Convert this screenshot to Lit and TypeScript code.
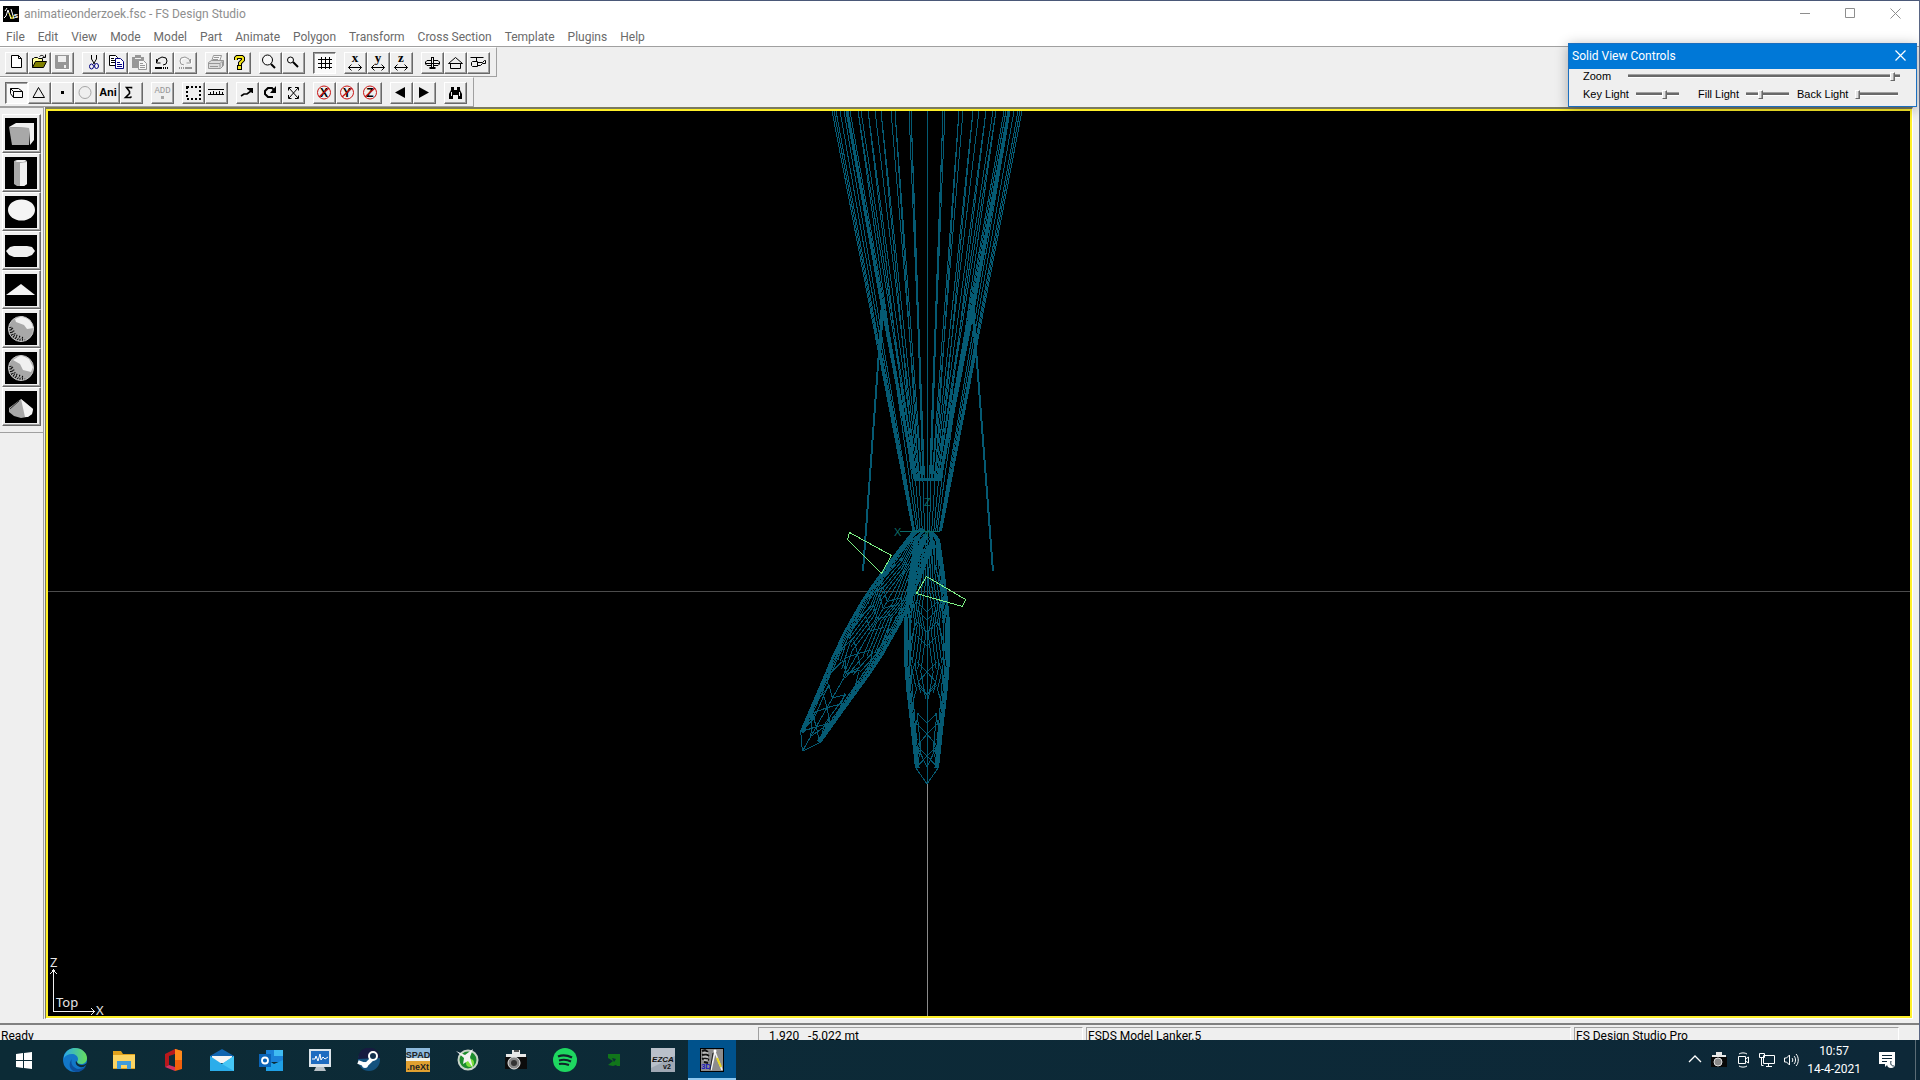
import { LitElement, html, svg, css, type SVGTemplateResult } from "lit";
import { customElement, state } from "lit/decorators.js";
import { classMap } from "lit/directives/class-map.js";

type Tool = { label: string; icon: SVGTemplateResult; pressed?: boolean; disabled?: boolean };

const line = (d: string, color = "#000", width = 1) =>
  svg`<path d=${d} fill="none" stroke=${color} stroke-width=${width}></path>`;
const fill = (d: string, color = "#000") => svg`<path d=${d} fill=${color}></path>`;
const glyph = (text: string, x: number, y: number, size: number, color = "#000", family = "Liberation Sans") =>
  svg`<text x=${x} y=${y} font-size=${size} font-weight="700" font-family="${family}, sans-serif" text-anchor="middle" fill=${color}>${text}</text>`;

const axisSize = (axis: string) => svg`
  ${glyph(axis, 9, 8, 13, "#000", "Liberation Serif")}
  ${line("M2.5 13.5H15.5M5.5 10.5l-3 3 3 3M12.5 10.5l3 3-3 3")}`;

const axisLock = (axis: string) => svg`
  ${glyph(axis, 9, 13, 12)}
  <circle cx="9" cy="8.5" r="6.5" fill="none" stroke="#c81414"></circle>
  ${line("M4 13L14 4", "#c81414", 1.4)}`;

const FILE_TOOLS: Tool[][] = [
  [
    { label: "New", icon: svg`<path d="M4.5 1.5h7l3 3v9h-10z" fill="#fff" stroke="#000"></path>${line("M11.5 1.5v3h3")}` },
    {
      label: "Open",
      icon: svg`<path d="M2.5 13.5v-9h1l1-1h3l1 1h4v3" fill="#ffffa0" stroke="#000"></path>
        <path d="M2.5 13.5l3-6h11l-3 6z" fill="#808000" stroke="#000"></path>${line("M9.5 2.5c2-2 4-1 5 1M15.5 0.5v3h-3")}`,
    },
    {
      label: "Save",
      disabled: true,
      icon: svg`${fill("M3 2h14v14H4l-1-1z", "#fff")}${fill("M2 1h14v14H3l-1-1z", "#979797")}${fill("M5 2h8v6H5zM11 11h2v3h-2z", "#efefef")}`,
    },
  ],
  [
    {
      label: "Cut",
      icon: svg`${line("M7.5 1v4l3 5M12.5 1v4l-3 5")}
        <ellipse cx="7.5" cy="12.5" rx="2" ry="2.5" fill="none" stroke="#000080"></ellipse>
        <ellipse cx="12.5" cy="12" rx="2" ry="2.5" fill="none" stroke="#000080"></ellipse>`,
    },
    {
      label: "Copy",
      icon: svg`<path d="M2.5 1.5h6l2 2v8h-8z" fill="#fff" stroke="#000"></path>${line("M4 4.5h3M4 6.5h5M4 8.5h5")}
        <path d="M8.5 4.5h5l3 3v7h-8z" fill="#fff" stroke="#000080"></path>${line("M10 8.5h3M10 10.5h5M10 12.5h5", "#000080")}`,
    },
    {
      label: "Paste",
      disabled: true,
      icon: svg`${fill("M2 3h3V1h6v2h3v11H2z", "#979797")}${line("M5 4.5h6", "#efefef")}
        <path d="M8.5 6.5h5l3 3v6h-8z" fill="#f6f6f6" stroke="#979797"></path>${line("M10 9.5h3M10 11.5h5M10 13.5h5", "#979797")}`,
    },
    { label: "Undo", icon: svg`${line("M4 8L5 5 9 3l4 1 1 3-1 3-3 1M3.5 5v4h4")}${line("M2 14h7", "#000", 2)}${line("M10 14h1M12 14h1M14 14h1", "#000", 2)}` },
    {
      label: "Redo",
      disabled: true,
      icon: svg`${line("M15 9L14 6l-4-2-4 1-1 3 1 3 3 1M15.5 6v4h-4", "#fff")}${line("M14 8L13 5 9 3 5 4 4 7l1 3 3 1M14.5 5v4h-4", "#979797")}${line("M3 14h1M5 14h1M7 14h1M9 14h7", "#979797", 2)}`,
    },
  ],
  [
    {
      label: "Print",
      disabled: true,
      icon: svg`<path d="M6.5 1.5h8l-2 6h-8z" fill="#f6f6f6" stroke="#979797"></path>${line("M7 3.5h5M6 5.5h5", "#979797")}
        <path d="M1.5 8.5l3-2h12v5l-3 3h-12z" fill="#ddd" stroke="#979797"></path>${line("M2 9.5h11v4M13 9.5l3-3M3 12.5h8M15.5 8v4", "#979797")}`,
    },
    {
      label: "Help",
      icon: svg`${line("M6 6V4l1-1h5l1 1v2l-3 3v2", "#000", 4)}${fill("M7 11h5v5H7z")}${line("M6 6V4l1-1h5l1 1v2l-3 3v2", "#f4e61a", 2)}${fill("M8 12h3v3H8z", "#f4e61a")}`,
    },
  ],
  [
    { label: "Zoom in", icon: svg`<circle cx="6.5" cy="6" r="5" fill="#f8f8f8" stroke="#000"></circle>${line("M10 10l4 4", "#000", 2)}` },
    { label: "Zoom out", icon: svg`<circle cx="6.5" cy="6" r="3" fill="#f8f8f8" stroke="#000"></circle>${line("M9 8l5 5", "#000", 2)}` },
  ],
  [{ label: "Grid", pressed: true, icon: line("M6.5 3v12M10.5 3v12M14.5 3v12M3 5.5h14M3 9.5h14M3 13.5h14") }],
  [
    { label: "Size X", icon: axisSize("x") },
    { label: "Size Y", icon: axisSize("y") },
    { label: "Size Z", icon: axisSize("z") },
  ],
  [
    {
      label: "Aircraft",
      icon: line("M8.5 4v11M10.5 4v11M8 3.5h3M8 6.5H4L2.5 8v2L4 11.5h4M11 6.5h4L16.5 8v2L15 11.5h-4M3 9.5h13M6.5 13.5h6M6.5 14.5h6"),
    },
    { label: "Building", icon: line("M2.5 9.5L9.5 3.5l7 6zM4.5 9.5v5h10v-5") },
    {
      label: "Helicopter",
      icon: line("M1.5 3.5h13M7.5 3.5v4M2.5 8.5l1-1h5v5h-5l-1-1zM8.5 8.5h5l2-2h1v3h-3l-2 2h-3"),
    },
  ],
];

const MODE_TOOLS: Tool[][] = [
  [
    { label: "Part mode", pressed: true, icon: line("M6.5 7.5h9v6h-9zM3.5 4.5h8l4 3M3.5 4.5l3 3M3.5 4.5v5l3 4") },
    { label: "Polygon mode", icon: line("M3 13.5L8.5 3.5l6 10z") },
    { label: "Point mode", icon: fill("M8 7h3v3H8z") },
    { label: "Circle mode", disabled: true, icon: svg`<circle cx="9" cy="8.5" r="6" fill="none" stroke="#a6a6a6"></circle>` },
    { label: "Animation mode", icon: glyph("Ani", 9, 12, 11) },
    { label: "Cross section mode", icon: line("M9.5 4.5V3.5H4.5l3 4v2l-4 4h5l1-1", "#000", 1.6) },
  ],
  [
    {
      label: "Add",
      disabled: true,
      icon: svg`<text x="9.5" y="9" font-size="9" font-family="Liberation Mono, monospace" text-anchor="middle" fill="#979797">ADD</text>${fill("M8 12h3v3H8z", "#a6a6a6")}`,
    },
  ],
  [
    {
      label: "Select area",
      icon: svg`<rect x="3" y="3" width="13" height="12" fill="none" stroke="#000" stroke-width="2" stroke-dasharray="2 2"></rect>`,
    },
    { label: "Measure", icon: line("M1 5.5h16M1 10.5h16M3.5 8v2M6.5 7v3M9.5 8v2M12.5 7v3M15.5 8v2") },
  ],
  [
    { label: "Move", icon: svg`${line("M3 12l3-2h3l4-3", "#000", 1.6)}${fill("M9 4h6v5h-1l-2-2-3-2z")}` },
    { label: "Rotate", icon: svg`${line("M12 13H7L4 10V7l3-3h4l2 2", "#000", 2)}${fill("M15 2v7H9z")}` },
    { label: "Scale", icon: line("M5 4l9 10M14 4L5 14M4.5 6.5v-3h3M11 3.5h3.5v3M4.5 11v3.5h3M11 14.5h3.5v-3") },
  ],
  [
    { label: "Lock X", icon: axisLock("X") },
    { label: "Lock Y", icon: axisLock("Y") },
    { label: "Lock Z", icon: axisLock("Z") },
  ],
  [
    { label: "Previous", icon: fill("M3 8.5L13 3v11z") },
    { label: "Next", icon: fill("M14 8.5L4 3v11z") },
  ],
  [
    {
      label: "Find",
      icon: svg`${fill("M5 3h3v3h3V3h3v3l2 4v5h-4v-4H7v4H3v-5l2-4z")}${line("M5.5 8v4M13.5 8v4", "#efefef")}`,
    },
  ],
];

const sphere = (light: string) => svg`
  <circle cx="16" cy="16" r="12.5" fill="#a8a8a8"></circle>
  <path d=${light} fill="#f0f0f0"></path>
  <path d="M5 14l2 8 6 5 7 1" fill="none" stroke="#000" stroke-width="3" stroke-dasharray="1 1.5"></path>
  <path d="M7 15l3 7 8 3" fill="none" stroke="#000" stroke-width="2" stroke-dasharray="1 2"></path>
  <circle cx="16" cy="16" r="12.5" fill="none" stroke="#c8c8c8" stroke-width="1"></circle>`;

const SHAPES: { label: string; icon: SVGTemplateResult }[] = [
  { label: "Box", icon: svg`${fill("M4 9l20 1v17H7z", "#a8a8a8")}${fill("M4 9l7-4h18v17l-4 5-1-17z", "#f0f0f0")}` },
  { label: "Cylinder", icon: svg`${fill("M9 4l3-1h8l2 1v23l-3 2h-7l-3-2z", "#a8a8a8")}${fill("M15 6l7-1v22l-3 2h-4zM10 4l3-1h7l1 1-3 1h-6z", "#f0f0f0")}` },
  { label: "Disc", icon: svg`<ellipse cx="16.5" cy="14" rx="13.5" ry="10.5" fill="#f4f4f4"></ellipse>` },
  { label: "Tube", icon: svg`<path d="M1 16l4-4 4-1h13l5 1 3 4-3 4-5 2H9l-5-2z" fill="#f0f0f0"></path>` },
  { label: "Triangle", icon: fill("M1 21L16 10l14 11z", "#f4f4f4") },
  { label: "Sphere", icon: sphere("M10 6l7-3 8 4 4 8-7 1-3-4-8-3z") },
  { label: "Geodesic sphere", icon: sphere("M8 8l8-5 8 4 4 8-2 5-8-2-3-6z") },
  { label: "Cone", icon: svg`${fill("M16 8L28 18l-1 5-5 3-6 1-7-2-5-4v-4z", "#a8a8a8")}${fill("M16 8l12 10-1 5-4 3-3 0z", "#f4f4f4")}${line("M5 18l9-8", "#333")}` },
];

const VIEW_TEAL = "#055a73";
const CENTER = 927;

/** Mesh of the tapered body: straight edges that narrow from the top of the view to a base line. */
function taperEdges(offsets: number[], ratio: number, base: number): string {
  return offsets
    .flatMap((o) => [o, -o])
    .map((o) => `M${CENTER + o} 111L${(CENTER + o * ratio).toFixed(1)} ${base}`)
    .join("");
}

/** Half width of the leg at each height, from the ankle joint down to the tip. */
const LEG_PROFILE: [number, number][] = [
  [531, 5], [540, 12], [567, 16], [600, 20], [623, 22], [660, 22], [687, 20], [713, 17], [740, 14], [768, 11], [784, 0],
];
const EDGE_FACTORS = [0.94, 0.88, 0.82, 0.74];
const INNER_FACTORS = [0.66, 0.55, 0.42, 0.3, 0.16];

const legSide = (side: number, f: number, rows = LEG_PROFILE) =>
  "M" + rows.map(([y, w]) => `${(CENTER + side * f * w).toFixed(1)} ${y}`).join("L");

function legMesh(): string {
  let d = "";
  for (const side of [1, -1]) {
    for (const f of EDGE_FACTORS) d += legSide(side, f, LEG_PROFILE.slice(0, 10));
    INNER_FACTORS.forEach((f, i) => {
      const rows = LEG_PROFILE.slice(0, 7 - (i % 2));
      d += "M" + rows.map(([y, w], k) => `${(CENTER + side * w * (f + (k % 2 ? 0.12 : -0.1))).toFixed(1)} ${y + i * 3}`).join("L");
    });
    LEG_PROFILE.slice(1, 9).forEach(([y, w], k) => {
      const [ny, nw] = LEG_PROFILE[k + 2];
      d += `M${CENTER + side * w} ${y}L${CENTER + side * nw * 0.7} ${ny}`;
      d += `M${CENTER + side * w * 0.5} ${y}L${CENTER + side * nw} ${ny}`;
    });
    for (const y of [612, 620, 632, 646, 672, 695, 723, 734, 756]) {
      d += `M${CENTER} ${y}L${CENTER + side * 10} ${y - 10}`;
    }
    d += `M${CENTER} 672L${CENTER + side * 9} 682L${CENTER} 695M${CENTER} 734L${CENTER + side * 10} 746L${CENTER} 767`;
    d += `M${CENTER} 756L${CENTER + side * 11} 768M${CENTER + side * 10} 713L${CENTER + side * 6} 750L${CENTER + side * 11} 768`;
  }
  return d + `M${CENTER} 531V784`;
}

const INNER_BODY = taperEdges([81, 79, 77, 69, 66, 59, 52, 46, 36, 32, 18, 16], 0.156, 479);
const OUTER_BODY = taperEdges([95, 93, 91, 87, 83, 69, 59, 46, 32, 16], 0.148, 531);
const LEG = legMesh();
const LEG_OUTLINE = legSide(1, 1, LEG_PROFILE.slice(0, 10)) + legSide(-1, 1, LEG_PROFILE.slice(0, 10));
const LEG_TIP = legSide(1, 1, LEG_PROFILE.slice(9)) + legSide(-1, 1, LEG_PROFILE.slice(9));

const leg = () => svg`${line(LEG, VIEW_TEAL)}${line(LEG_OUTLINE, VIEW_TEAL, 2)}${line(LEG_TIP, VIEW_TEAL)}`;

const APPS: { label: string; active?: boolean; icon: SVGTemplateResult }[] = [
  { label: "Start", icon: fill("M4 6l7-1v7H4zM12 5l8-1v8h-8zM4 13h7v7l-7-1zM12 13h8v8l-8-1z", "#fff") },
  {
    label: "Edge",
    icon: svg`<defs>
        <linearGradient id="edge-top" x1="0" x2="1"><stop offset="0" stop-color="#2aa8e8"></stop><stop offset="1" stop-color="#66e05a"></stop></linearGradient>
      </defs>
      <circle cx="12" cy="12" r="12" fill="#1277c8"></circle>
      <path d="M1 8C3 2 8 0 12 0c7 0 12 5 12 10 0 4-3 6-6 6-2 0-4-1-4-2 0-1 1-1 1-3 0-3-3-5-6-5-4 0-7 2-8 4z" fill="url(#edge-top)"></path>
      <path d="M9 11c-2 4 1 9 6 10 3 0 6-1 8-3-2 4-6 6-10 6C6 23 5 15 9 11z" fill="#0d4f9c"></path>
      <path d="M14 14c0 1 2 3 5 3 2 0 3-1 5-2-1 3-4 5-7 4s-5-3-4-6z" fill="#0e2b3a"></path>`,
  },
  {
    label: "File Explorer",
    icon: svg`${fill("M1 3h8l2 3h12v15H1z", "#e0a11c")}${fill("M1 7h22v13H1z", "#fcd462")}${fill("M5 13h14v8h-4v-4H9v4H5z", "#3f9bdc")}`,
  },
  { label: "Office", icon: svg`${fill("M14 1l7 2v18l-7 2z", "#f2600c")}${fill("M14 1v5L8 8v9l-4 2V6z", "#b8181c")}${fill("M4 19l4-2 6 2v4z", "#d83060")}${fill("M14 1l7 2v9h-7z", "#ff8a1c")}` },
  {
    label: "Mail",
    icon: svg`${fill("M0 8L12 1l12 7v4H0z", "#0f64b0")}${fill("M2 8h20v7H2z", "#f4f4f4")}${fill("M0 8l12 8L24 8v15H0z", "#2badea")}${fill("M12 16L24 8v15z", "#45c6f5")}`,
  },
  {
    label: "Outlook",
    icon: svg`${fill("M7 2h17v12H7z", "#1a82d8")}${fill("M15 2h9v6h-9z", "#3fbcf2")}${fill("M7 11l8 5 9-4v11H7z", "#1fa0e6")}${fill("M0 6h12v13H0z", "#0a64b8")}<circle cx="6" cy="12.5" r="3" fill="none" stroke="#fff" stroke-width="1.8"></circle>`,
  },
  {
    label: "System monitor",
    icon: svg`${fill("M1 1h22v18H1z", "#dce4ea")}${fill("M3 3h18v13H3z", "#1f6cc0")}${fill("M8 19h8l2 4H6z", "#b8c0c6")}${line("M4 11h3l1-3 2 5 2-7 1 6 2-3 2 2 3-2", "#fff")}`,
  },
  {
    label: "Steam",
    icon: svg`<circle cx="12" cy="12" r="11" fill="#14527e"></circle><path d="M1 11a11 11 0 0 1 22-1z" fill="#171b40"></path>
      ${line("M1 14l8 3 6-6", "#fff", 4)}<circle cx="16" cy="8" r="4" fill="#14304e" stroke="#fff" stroke-width="2"></circle><circle cx="8" cy="17" r="3" fill="#fff"></circle>`,
  },
  {
    label: "SPAD.neXt",
    icon: svg`${fill("M0 0h24v12H0z", "#8db9dc")}${fill("M0 12h24v12H0z", "#e0a030")}${fill("M0 10h24v3H0z", "#f0f0e8")}
      ${glyph("SPAD", 12, 10, 9, "#222")}${glyph(".neXt", 12, 22, 9, "#222")}`,
  },
  {
    label: "Flight tracker",
    icon: svg`<circle cx="13" cy="12" r="9.5" fill="#1c8c2c" stroke="#c8d4c8" stroke-width="2"></circle><circle cx="15" cy="15" r="4" fill="#7ee03c"></circle>
      ${fill("M1 3l9 4 8-6-3 8 3 11-5-7-5 3 1-6z", "#f2f2f2")}`,
  },
  {
    label: "Camera",
    icon: svg`${fill("M2 6h20v3H2zM8 2h8v5H8z", "#e8e8e8")}${fill("M1 9h22v12H1z", "#0c0c0c")}${fill("M10 2h5v2h-5z", "#555")}<circle cx="10" cy="15" r="6" fill="#888" stroke="#e4e4e4"></circle><circle cx="10" cy="15" r="3" fill="#333"></circle>`,
  },
  {
    label: "Spotify",
    icon: svg`<circle cx="12" cy="12" r="12" fill="#1ed760"></circle>${line("M5 8.5c5-2 10-1 14 1", "#10222a", 2.4)}${line("M6 12.5c4-1 8-1 12 1", "#10222a", 2)}${line("M6 16c4-1 7 0 10 1", "#10222a", 2)}`,
  },
  { label: "Updater", icon: svg`${fill("M6 6h12v12h-3l-1-1-3 1-5-1 5-4-5-3z", "#11751a")}${fill("M10 10l4 1-2 3z", "#0e2b3a")}` },
  {
    label: "EZCA",
    icon: svg`${fill("M0 0h24v24H0z", "#9fa8b4")}${fill("M0 0h24v8L0 20z", "#b9c0ca")}
      <text x="12" y="14" font-size="8" font-style="italic" font-weight="700" font-family="Liberation Sans, sans-serif" text-anchor="middle" fill="#111">EZCA</text>
      ${glyph("v2", 16, 21, 7, "#111")}`,
  },
  {
    label: "FS Design Studio",
    active: true,
    icon: svg`<rect x="0.5" y="0.5" width="23" height="23" fill="#8c8c8c" stroke="#000"></rect>
      ${line("M2 3l3-1 3 2M2 7l4-1 3 2M2 11l3-1 4 2M4 14l4 1", "#111", 2)}${line("M3 5h5M3 9h5M4 12h4", "#eee")}
      ${line("M15 4l-4 18M15 4l7 18", "#f4f4f4", 1.5)}${line("M17 10l4 9", "#e8d820", 2)}${line("M13 5l-3 17", "#222")}<circle cx="15" cy="3" r="1.5" fill="#fff"></circle>
      ${glyph("3D", 6, 21, 8, "#1a1ac0")}`,
  },
];

const TRAY: { label: string; icon: SVGTemplateResult }[] = [
  { label: "Show hidden icons", icon: line("M2 10l6-6 6 6", "#fff", 1.3) },
  {
    label: "Camera",
    icon: svg`${fill("M1 3h14v3H1zM5 0h6v4H5z", "#e8e8e8")}${fill("M0 5h16v10H0z", "#080808")}<circle cx="7" cy="10" r="4" fill="#888" stroke="#ddd"></circle>`,
  },
  { label: "Meet Now", icon: line("M4 2c2-1.5 6-1.5 8 0M4 14c2 1.5 6 1.5 8 0M3.5 4.5h7v7h-7zM10.5 7l3-2v6l-3-2", "#fff") },
  { label: "Network", icon: line("M4.5 3.5h11v8h-11zM7 14.5h6M9.5 11.5v3M0.5 1.5h5v4h-5zM2.5 5.5v8h2", "#fff") },
  { label: "Volume", icon: line("M1.5 6v4h2l3 3V3l-3 3zM9 6c1 1 1 3 0 4M11 4c2 2 2 6 0 8M13 2c3 3 3 9 0 12", "#fff") },
];

const MENUS = [
  "File", "Edit", "View", "Mode", "Model", "Part", "Animate", "Polygon", "Transform", "Cross Section", "Template", "Plugins", "Help",
];

@customElement("fs-toolbar")
class FsToolbar extends LitElement {
  static properties = { groups: { attribute: false } };
  declare groups: Tool[][];

  static styles = css`
    :host { display: flex; align-self: flex-start; border-right: 1px solid #a0a0a0; border-bottom: 1px solid #a0a0a0; border-top: 1px solid #fff; padding: 4px 6px 2px 5px; gap: 8px; }
    .group { display: flex; }
    button { display: grid; place-items: center; width: 23px; height: 22px; padding: 0; background: #efefef; border: 1px solid; border-color: #fff #696969 #696969 #fff; box-shadow: inset -1px -1px #a0a0a0; }
    button.pressed { background: #f9f9f9; border-color: #696969 #fff #fff #696969; box-shadow: inset 1px 1px #a0a0a0; }
    svg { display: block; width: 19px; height: 18px; overflow: visible; }
  `;

  render() {
    return this.groups.map(
      (group) => html`<div class="group" role="group">
        ${group.map(
          (t) => html`<button
            type="button"
            aria-label=${t.label}
            aria-pressed=${t.pressed ? "true" : "false"}
            ?disabled=${t.disabled}
            class=${classMap({ pressed: !!t.pressed })}
          ><svg viewBox="0 0 19 18" aria-hidden="true">${t.icon}</svg></button>`,
        )}
      </div>`,
    );
  }
}

@customElement("solid-view-controls")
class SolidViewControls extends LitElement {
  static styles = css`
    :host { display: block; background: #efefef; border: 1px solid #1a6fc0; box-shadow: 0 2px 12px rgba(0, 0, 0, 0.3); font: 11px/14px "Liberation Sans", Arial, sans-serif; color: #000; }
    header { display: flex; align-items: center; justify-content: space-between; box-sizing: border-box; height: 25px; padding: 0 9px 2px 3px; background: #0078d7; color: #fff; font: 12px/16px Roboto, sans-serif; }
    h2 { margin: 0; font: inherit; }
    header button { padding: 0; border: 0; background: none; display: flex; }
    .close { width: 13px; height: 13px; }
    .row { display: flex; align-items: center; padding: 0 16px 0 14px; }
    .zoom { height: 14px; gap: 17px; }
    .lights { display: grid; grid-template-columns: 115px 99px auto; height: 21px; padding-bottom: 2px; }
    .field { display: flex; align-items: center; gap: 7px; }
    label { white-space: nowrap; }
    input { appearance: none; background: none; margin: 0; height: 11px; width: 43px; }
    .zoom input { flex: 1; width: auto; }
    input::-webkit-slider-runnable-track { height: 4px; background: linear-gradient(#a0a0a0 0 1px, #696969 1px 3px, #fff 3px); }
    input::-webkit-slider-thumb { appearance: none; width: 5px; height: 9px; margin-top: -2px; background: #e4e4e4; border: 1px solid; border-color: #fff #696969 #696969 #fff; box-sizing: border-box; box-shadow: inset -1px 0 #a0a0a0; }
  `;

  render() {
    const lights = [
      { id: "key", label: "Key Light", value: 68 },
      { id: "fill", label: "Fill Light", value: 31 },
      { id: "back", label: "Back Light", value: 0 },
    ];
    return html`
      <header>
        <h2>Solid View Controls</h2>
        <button type="button" aria-label="Close">
          <svg class="close" viewBox="0 0 13 13">${line("M1.5 1.5l10 10M11.5 1.5l-10 10", "#fff", 1.2)}</svg>
        </button>
      </header>
      <div class="row zoom">
        <label for="zoom">Zoom</label>
        <input id="zoom" type="range" min="0" max="100" .value=${"98"} />
      </div>
      <div class="row lights">
        ${lights.map(
          (l) => html`<div class="field">
            <label for=${l.id}>${l.label}</label>
            <input id=${l.id} type="range" min="0" max="100" .value=${String(l.value)} />
          </div>`,
        )}
      </div>
    `;
  }
}

@customElement("wire-view")
class WireView extends LitElement {
  static styles = css`
    :host { display: block; position: relative; background: #000; overflow: hidden; border: 2px solid #fff02a; }
    .scene { display: block; position: absolute; inset: 0; width: 100%; height: 100%; shape-rendering: crispEdges; }
    .axis-name { font: 13px "Noto Sans", "Open Sans", sans-serif; fill: #e6e6e6; }
    .origin-name { font: 11px "Liberation Sans", sans-serif; fill: #0b6a68; }
  `;

  render() {
    return html`<svg class="scene" viewBox="48 111 1862 905" preserveAspectRatio="xMidYMid slice" role="img" aria-label="Top view">
      ${line("M0 591.5H1920", "#4c4c4c")} ${line("M927.5 784V1016", "#8a8a8a")}
      ${line(INNER_BODY, VIEW_TEAL)} ${line(OUTER_BODY, VIEW_TEAL)}
      ${line("M927.5 111V531", VIEW_TEAL)}
      ${line("M847 111L883 310L915 479H940L973 310L1009 111", VIEW_TEAL, 3)}
      ${line("M882 310L863 571M973 310L993 571", VIEW_TEAL, 2)}
      ${line("M882 310L880 350M973 310L976 350", VIEW_TEAL, 3)}
      ${line("M880 350L914 531M976 350L941 531", VIEW_TEAL, 2)}
      ${line("M926 535L918 552L913 575L909 596", VIEW_TEAL, 5)}
      <g transform="rotate(29.5 927 531)">${leg()}</g>
      ${leg()}
      ${line("M900 531.5H940", "#0b6a68")}
      <text class="origin-name" x="894" y="536">X</text>
      <text class="origin-name" x="924" y="506">Z</text>
      <text class="origin-name" x="924" y="536">y</text>
      ${line("M849.5 532.5l42 23-10 18-34-34z", "#7df084")}
      ${line("M926.5 576.5l39 23-3 7-46-13z", "#7df084")}
      ${line("M53.5 971V1011.5H94M50 974l3.5-4 3.5 4M91 1008l3.5 3.5-3.5 3.5", "#f0f0f0")}
      <text class="axis-name" x="50" y="967">Z</text>
      <text class="axis-name" x="56" y="1007">Top</text>
      <text class="axis-name" x="96" y="1015">X</text>
    </svg>`;
  }
}

@customElement("app-root")
class AppRoot extends LitElement {
  @state() private time = "10:57";
  @state() private date = "14-4-2021";

  static styles = css`
    :host { display: flex; flex-direction: column; height: 100vh; overflow: hidden; background: #efefef; font: 12px/16px Roboto, "Open Sans", sans-serif; color: #000; }
    button { padding: 0; border: 0; background: none; font: inherit; color: inherit; }
    .window { flex: 1; min-height: 0; position: relative; display: flex; flex-direction: column; box-sizing: border-box; border-top: 1px solid #4a5878; border-right: 1px solid #5a6684; overflow: hidden; }
    .title { display: flex; align-items: center; height: 25px; padding: 0 18px 0 3px; gap: 5px; background: #fff; color: #8e8e8e; }
    .title h1 { flex: 1; margin: 0; font: inherit; }
    .title .logo { width: 16px; height: 16px; }
    .title .caption { display: flex; gap: 34px; }
    .title .caption svg { display: block; width: 11px; height: 11px; }
    .menu { display: flex; gap: 13px; height: 21px; padding: 1px 6px 0; align-items: center; background: #fff; color: #6a6a6a; border-bottom: 1px solid #a0a0a0; box-sizing: border-box; }
    .tools { display: flex; flex-direction: column; }
    .body { flex: 1; min-height: 0; display: flex; }
    .palette { display: flex; flex-direction: column; width: 44px; border-right: 1px solid #a0a0a0; border-top: 1px solid #a0a0a0; margin-right: 1px; box-sizing: border-box; }
    .palette .shapes { display: flex; flex-direction: column; padding: 6px 0 6px 2px; border-bottom: 1px solid #a0a0a0; }
    .palette button { width: 39px; height: 39px; box-sizing: border-box; padding: 2px; border: 1px solid; border-color: #fff #696969 #696969 #fff; box-shadow: inset -1px -1px #a0a0a0; background: #efefef; }
    .palette svg { display: block; width: 32px; height: 32px; background: #000; }
    .frame { flex: 1; display: grid; margin: 0 6px 0 0; border: 1px solid; border-width: 2px 1px 1px; border-color: #7a7a60 #fff #fff #7a7a60; }
    .status { display: flex; gap: 3px; height: 17px; box-sizing: border-box; padding: 2px 0 0; margin-top: 4px; border-top: 2px solid #808080; line-height: 16px; }
    .ready { flex: 0 0 755px; padding: 1px 0 0 1px; box-sizing: border-box; }
    .pane { box-sizing: border-box; border: 1px solid; border-color: #a0a0a0 #fff #fff #a0a0a0; padding-left: 1px; white-space: pre; overflow: hidden; height: 22px; }
    .position { flex: 0 0 325px; padding-left: 10px; }
    .model { flex: 0 0 485px; }
    .product { flex: 1; margin-right: 20px; }
    .dialog { position: absolute; top: 42px; right: 2px; width: 349px; box-sizing: border-box; z-index: 1; }
    .taskbar { display: flex; align-items: stretch; height: 40px; flex: none; background: linear-gradient(90deg, #0c2b36, #0d2838); color: #fff; }
    .apps { display: flex; gap: 1px; flex: 1; }
    .apps button { display: grid; place-items: center; width: 48px; border-bottom: 2px solid transparent; border-top: 2px solid transparent; box-sizing: border-box; }
    .apps button:first-child { margin-right: 2px; }
    .apps button.active { background: #00528c; border-bottom-color: #8ec8f0; }
    .apps svg { width: 24px; height: 24px; }
    .tray { display: flex; align-items: center; gap: 8px; }
    .tray svg { display: block; width: 16px; height: 16px; }
    .clock { text-align: center; line-height: 18px; }
    .clock span { display: block; }
    .notice { margin: 0 12px 0 10px; }
    .desktop { align-self: stretch; width: 4px; border-left: 1px solid #5b6c76; }
  `;

  render() {
    return html`
      <div class="window">
        <header class="title">
          <svg class="logo" viewBox="0 0 16 16" aria-hidden="true">
            ${fill("M0 0h16v16H0z")}${line("M1 12l2-2 2-6 2 6 1 3M8 3l3 10M2 5l2-3", "#fff")}${line("M6 7l3 6 2-4", "#e8e020")}
            ${glyph("s", 13, 12, 8, "#fff")}
          </svg>
          <h1>animatieonderzoek.fsc - FS Design Studio</h1>
          <div class="caption">
            <button type="button" aria-label="Minimize"><svg viewBox="0 0 11 11">${line("M0 5.5h10", "#8e8e8e")}</svg></button>
            <button type="button" aria-label="Maximize"><svg viewBox="0 0 11 11">${line("M0.5 0.5h9v9h-9z", "#8e8e8e")}</svg></button>
            <button type="button" aria-label="Close"><svg viewBox="0 0 11 11">${line("M0.5 0.5l10 10M10.5 0.5l-10 10", "#8e8e8e")}</svg></button>
          </div>
        </header>
        <nav class="menu" aria-label="Main menu">${MENUS.map((m) => html`<button type="button">${m}</button>`)}</nav>
        <div class="tools">
          <fs-toolbar .groups=${FILE_TOOLS}></fs-toolbar>
          <fs-toolbar .groups=${MODE_TOOLS}></fs-toolbar>
        </div>
        <main class="body">
          <aside class="palette">
            <div class="shapes">
              ${SHAPES.map((s) => html`<button type="button" aria-label=${s.label}><svg viewBox="0 0 32 32">${s.icon}</svg></button>`)}
            </div>
          </aside>
          <div class="frame"><wire-view></wire-view></div>
        </main>
        <footer class="status">
          <div class="ready">Ready</div>
          <div class="pane position">1.920   -5.022 mt</div>
          <div class="pane model">FSDS Model Lanker.5</div>
          <div class="pane product">FS Design Studio Pro</div>
        </footer>
        <solid-view-controls class="dialog" role="dialog" aria-label="Solid View Controls"></solid-view-controls>
      </div>
      <div class="taskbar">
        <div class="apps">
          ${APPS.map(
            (a) => html`<button type="button" aria-label=${a.label} class=${classMap({ active: !!a.active })}>
              <svg viewBox="0 0 24 24">${a.icon}</svg>
            </button>`,
          )}
        </div>
        <div class="tray">
          ${TRAY.map((t) => html`<button type="button" aria-label=${t.label}><svg viewBox="0 0 16 16">${t.icon}</svg></button>`)}
          <div class="clock"><span>${this.time}</span><span>${this.date}</span></div>
          <button type="button" class="notice" aria-label="Notifications">
            <svg viewBox="0 0 16 16">${fill("M0 0h16v12H9l-3 3v-3H0z", "#fff")}${line("M3 3.5h10M3 6.5h10M3 9.5h5", "#0d2838")}
              <circle cx="12" cy="12" r="4" fill="#fff"></circle>${line("M12 9c-1 4 1 5 3 5", "#0d2838")}</svg>
          </button>
          <div class="desktop"></div>
        </div>
      </div>
    `;
  }
}
